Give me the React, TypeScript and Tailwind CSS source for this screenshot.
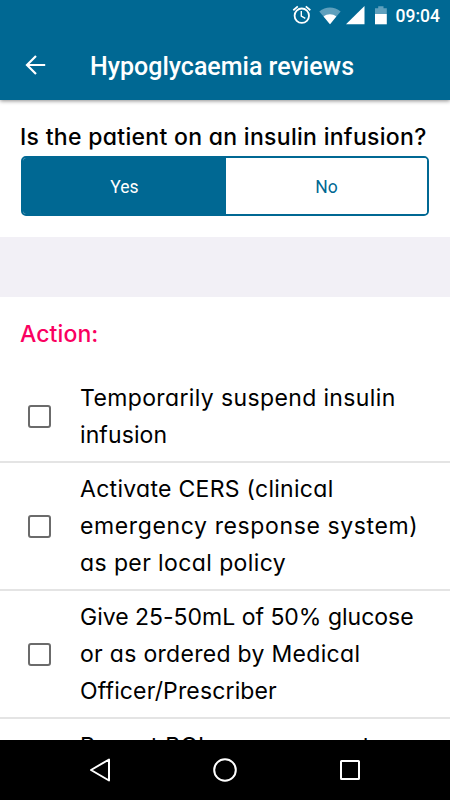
type Line = { text: string; spacing: string };

const geometric = "font-['Inter','Liberation_Sans',sans-serif] [font-feature-settings:'cv11','ss03']";

const actions: { height: string; offset: string; lines: Line[] }[] = [
  {
    height: "h-[92px]",
    offset: "pt-[2px]",
    lines: [
      { text: "Temporarily suspend insulin", spacing: "tracking-[0.37px]" },
      { text: "infusion", spacing: "tracking-[0.1px]" },
    ],
  },
  {
    height: "h-[128px]",
    offset: "",
    lines: [
      { text: "Activate CERS (clinical", spacing: "tracking-[0.29px]" },
      { text: "emergency response system)", spacing: "tracking-[0.62px]" },
      { text: "as per local policy", spacing: "tracking-[0.4px]" },
    ],
  },
  {
    height: "h-[128px]",
    offset: "",
    lines: [
      { text: "Give 25-50mL of 50% glucose", spacing: "-tracking-[0.01px]" },
      { text: "or as ordered by Medical", spacing: "tracking-[0.3px]" },
      { text: "Officer/Prescriber", spacing: "tracking-[0.14px]" },
    ],
  },
  {
    height: "h-[92px]",
    offset: "self-start pt-[9px]",
    lines: [{ text: "Repeat BGL measurement", spacing: "tracking-[0.25px]" }],
  },
];

function StatusBar() {
  return (
    <div className="flex h-8 shrink-0 items-center pl-[292px] text-white">
      <svg className="shrink-0" width="103.5" height="32" viewBox="0 0 103.5 32" fill="none">
        <g stroke="white" strokeWidth="1.8">
          <circle cx="9.8" cy="15.7" r="7.2" />
          <path d="M1.3 10.2l4.5-3.8M18.3 10.2l-4.5-3.8" />
          <path d="M9.3 11v5l4 2.4" strokeWidth="1.4" />
        </g>
        <path d="M27.3 11.5C33.5 6.3 42.3 6.3 48.6 11.5L38 24.3z" fill="#5fa0bd" />
        <path d="M31.6 16.6c3.6-3.1 9-3.1 12.7 0L38 24.3z" fill="white" />
        <path d="M54 24.3h18.5V6z" fill="white" />
        <path d="M83 8.2h3.2V6.3h5.3v1.9h3.3V14H83z" fill="#5fa0bd" />
        <path d="M83 14h11.8v10.3H83z" fill="white" />
      </svg>
      <span className="font-['Roboto',sans-serif] text-[17.5px] font-medium leading-8">09:04</span>
    </div>
  );
}

function TextLine({ text, spacing }: Line) {
  return <span className={`block whitespace-nowrap ${spacing}`}>{text}</span>;
}

export default function App() {
  return (
    <div className="flex h-[800px] w-[450px] flex-col overflow-hidden bg-white text-black">
      <header className="z-10 flex h-[100px] shrink-0 flex-col bg-[#006893] shadow-[0_1px_4px_rgba(0,0,0,0.45)]">
        <StatusBar />
        <div className="flex h-[68px] items-center pl-[25px] text-white">
          <svg width="21" height="20" viewBox="0 0 21 20" className="mb-[2px]" fill="none" stroke="white" strokeWidth="2.2">
            <path d="M20.2 10H2M11 1L2 10l9 9" />
          </svg>
          <h1 className="ml-[44px] whitespace-nowrap pt-[2px] font-['Roboto',sans-serif] text-[25px] font-medium leading-8">
            Hypoglycaemia reviews
          </h1>
        </div>
      </header>

      <section className="h-[137px] shrink-0 px-[21px] pt-[18px]">
        <h2 className={`${geometric} -ml-px h-[38px] whitespace-nowrap pt-px text-[23px] font-medium leading-[36px] tracking-[0.3px]`}>
          Is the patient on an insulin infusion?
        </h2>
        <div className="flex h-[60px] w-[408px] overflow-hidden rounded-[5px] border-2 border-[#006893] font-['Roboto',sans-serif] text-[17.5px]">
          <button className="w-[203px] bg-[#006893] pt-[2px] text-white">Yes</button>
          <button className="flex-1 bg-white pt-[2px] text-[#006893]">No</button>
        </div>
      </section>

      <div className="h-[60px] shrink-0 bg-[#f2f0f6]" />

      <section className="h-[443px] shrink-0 overflow-hidden">
        <h2 className={`${geometric} h-[74px] pl-[20px] pt-[19px] text-[23px] font-medium leading-[37px] tracking-[0.1px] text-[#fa0060]`}>
          Action:
        </h2>
        {actions.map((action) => (
          <label
            key={action.lines[0].text}
            className={`flex items-center border-b-2 border-[#e4e4e4] pl-7 ${action.height}`}
          >
            <span className="h-[23px] w-[23px] shrink-0 rounded-[3px] border-2 border-[#6b6b6b]" />
            <span className={`${geometric} ml-[29px] text-[23px] leading-[37px] ${action.offset}`}>
              {action.lines.map((line) => (
                <TextLine key={line.text} {...line} />
              ))}
            </span>
          </label>
        ))}
      </section>

      <nav className="z-10 h-[60px] shrink-0 bg-black">
        <svg width="450" height="60" viewBox="0 0 450 60" fill="none" stroke="white" strokeWidth="2" strokeLinejoin="round">
          <path d="M109 19.5v21L91 30z" />
          <circle cx="225" cy="30" r="10.8" />
          <rect x="341" y="21" width="18" height="18" rx="0.5" />
        </svg>
      </nav>
    </div>
  );
}
